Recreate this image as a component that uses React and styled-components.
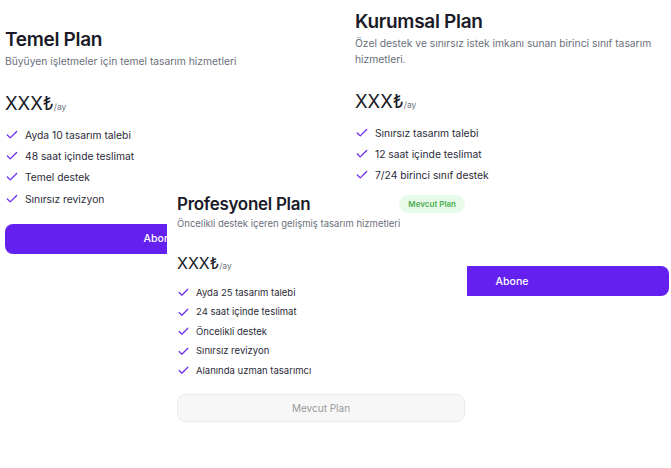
import styled, { createGlobalStyle } from "styled-components";
import { Check } from "lucide-react";

const GlobalStyle = createGlobalStyle`
  html, body { margin: 0; background: #fff; }
  body { font-family: Inter, "Noto Sans", sans-serif; color: #1d1d2b; }
`;

const plans = {
  basic: {
    title: "Temel Plan",
    desc: "Büyüyen işletmeler için temel tasarım hizmetleri",
    features: ["Ayda 10 tasarım talebi", "48 saat içinde teslimat", "Temel destek", "Sınırsız revizyon"],
  },
  pro: {
    title: "Profesyonel Plan",
    desc: "Öncelikli destek içeren gelişmiş tasarım hizmetleri",
    features: [
      "Ayda 25 tasarım talebi",
      "24 saat içinde teslimat",
      "Öncelikli destek",
      "Sınırsız revizyon",
      "Alanında uzman tasarımcı",
    ],
  },
  corp: {
    title: "Kurumsal Plan",
    desc: "Özel destek ve sınırsız istek imkanı sunan birinci sınıf tasarım hizmetleri.",
    features: ["Sınırsız tasarım talebi", "12 saat içinde teslimat", "7/24 birinci sınıf destek"],
  },
};

const App = () => {
  return (
    <Page>
      <GlobalStyle />
      <Row>
        <Card $w={310} $top={28}>
          <Title>{plans.basic.title}</Title>
          <Desc>{plans.basic.desc}</Desc>
          <Price>
            XXX₺<Per>/ay</Per>
          </Price>
          <Features>
            {plans.basic.features.map((f) => (
              <Feature key={f}>
                <Check size={14} strokeWidth={2.2} color="#6b2bea" />
                {f}
              </Feature>
            ))}
          </Features>
          <Subscribe $mt={17}>Abone</Subscribe>
        </Card>

        <Card $w={314} $top={10}>
          <Title>{plans.corp.title}</Title>
          <Desc>{plans.corp.desc}</Desc>
          <Price>
            XXX₺<Per>/ay</Per>
          </Price>
          <Features>
            {plans.corp.features.map((f) => (
              <Feature key={f}>
                <Check size={14} strokeWidth={2.2} color="#6b2bea" />
                {f}
              </Feature>
            ))}
          </Features>
          <Subscribe $mt={83}>Abone</Subscribe>
        </Card>
      </Row>

      <ProCard>
        <ProHeader>
          <ProTitle>{plans.pro.title}</ProTitle>
          <Badge>Mevcut Plan</Badge>
        </ProHeader>
        <ProDesc>{plans.pro.desc}</ProDesc>
        <ProPrice>
          XXX₺<Per>/ay</Per>
        </ProPrice>
        <ProFeatures>
          {plans.pro.features.map((f) => (
            <ProFeature key={f}>
              <Check size={13} strokeWidth={2.2} color="#6b2bea" />
              {f}
            </ProFeature>
          ))}
        </ProFeatures>
        <CurrentButton disabled>Mevcut Plan</CurrentButton>
      </ProCard>
    </Page>
  );
};

export default App;

// whole screen
const Page = styled.div`
  position: relative;
  width: 671px;
  height: 468px;
  overflow: hidden;
`;

const Row = styled.div`
  display: flex;
  align-items: flex-start;
  gap: 40px;
  padding-left: 5px;
`;

// side cards
const Card = styled.div`
  width: ${(p) => p.$w}px;
  margin-top: ${(p) => p.$top}px;
  display: flex;
  flex-direction: column;
`;

const Title = styled.h2`
  margin: 0;
  font-family: Inter, sans-serif;
  font-weight: 600;
  font-size: 19px;
  line-height: 24px;
  letter-spacing: -0.3px;
  color: #1a1a28;
`;

const Desc = styled.p`
  margin: 1px 0 0;
  font-size: 10.3px;
  line-height: 16px;
  color: #6b6f7b;
`;

const Price = styled.div`
  margin-top: 22px;
  font-size: 18.5px;
  line-height: 24px;
  font-weight: 400;
  color: #1a1a28;
`;

const Per = styled.span`
  font-size: 8.5px;
  font-weight: 400;
  color: #6b6f7b;
`;

const Features = styled.ul`
  list-style: none;
  margin: 8px 0 0;
  padding: 0;
  display: flex;
  flex-direction: column;
  gap: 5.2px;
`;

const Feature = styled.li`
  display: flex;
  align-items: center;
  gap: 6px;
  font-size: 10.3px;
  line-height: 16px;
  color: #2b2b38;
`;

const Subscribe = styled.button`
  margin-top: ${(p) => p.$mt}px;
  height: 30px;
  border: none;
  border-radius: 8px;
  background: #6420ee;
  color: #fff;
  font-family: Inter, sans-serif;
  font-size: 10.5px;
  font-weight: 500;
  cursor: pointer;
`;

// middle card, lies over the other two
const ProCard = styled.div`
  position: absolute;
  left: 167px;
  top: 186px;
  width: 300px;
  box-sizing: border-box;
  padding: 7px 2px 20px 10px;
  background: #fff;
  display: flex;
  flex-direction: column;
`;

const ProHeader = styled.div`
  display: flex;
  align-items: center;
  justify-content: space-between;
`;

const ProTitle = styled.h3`
  margin: 0;
  font-weight: 600;
  font-size: 17px;
  line-height: 22px;
  letter-spacing: -0.3px;
  color: #1a1a28;
`;

const Badge = styled.span`
  height: 18px;
  padding: 0 9px;
  border-radius: 9px;
  background: #e8fae9;
  color: #4caf50;
  font-size: 8px;
  font-weight: 600;
  line-height: 18px;
`;

const ProDesc = styled.p`
  margin: 2px 0 0;
  font-size: 9.5px;
  line-height: 14px;
  color: #6b6f7b;
`;

const ProPrice = styled.div`
  margin-top: 22px;
  font-size: 16px;
  line-height: 20px;
  font-weight: 400;
  color: #1a1a28;
`;

const ProFeatures = styled(Features)`
  margin-top: 9.5px;
  gap: 5.5px;
`;

const ProFeature = styled(Feature)`
  font-size: 9.5px;
  line-height: 14px;
  gap: 6px;
`;

const CurrentButton = styled.button`
  margin-top: 16px;
  height: 28px;
  border: 1px solid #ececec;
  border-radius: 8px;
  background: #f7f7f7;
  color: #9a9a9a;
  font-family: Inter, sans-serif;
  font-size: 10px;
  font-weight: 400;
`;
